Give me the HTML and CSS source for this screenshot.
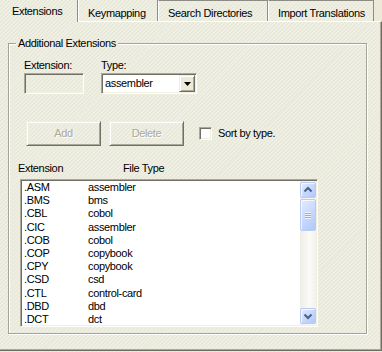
FILE: index.html
```html
<!DOCTYPE html>
<html lang="en">
<head>
    <meta charset="UTF-8">
    <title>Extensions</title>
    <link rel="stylesheet" href="styles.css">
</head>
<body>
    <div class="dialog">
        <div class="tabs">
            <div class="tab tab-active tab-extensions">Extensions</div>
            <div class="tab tab-keymapping">Keymapping</div>
            <div class="tab tab-search">Search Directories</div>
            <div class="tab tab-import">Import Translations</div>
        </div>
        <div class="panel">
            <fieldset class="group">
                <legend>Additional Extensions</legend>
                <div class="fields">
                    <div class="field field-ext">
                        <label>Extension:</label>
                        <div class="edit"></div>
                    </div>
                    <div class="field field-type">
                        <label>Type:</label>
                        <div class="combo">
                            <span class="combo-value">assembler</span>
                            <span class="combo-button">
                                <svg width="7" height="4" viewBox="0 0 7 4"><polygon points="0,0 7,0 3.5,4" fill="#000"/></svg>
                            </span>
                        </div>
                    </div>
                </div>
                <div class="actions">
                    <button class="btn" disabled>Add</button>
                    <button class="btn" disabled>Delete</button>
                    <label class="check"><span class="check-box"></span>Sort by type.</label>
                </div>
                <div class="list-head">
                    <span>Extension</span>
                    <span>File Type</span>
                </div>
                <div class="listbox">
                    <div class="list-rows">
                        <div class="row"><span>.ASM</span><span>assembler</span></div>
                        <div class="row"><span>.BMS</span><span>bms</span></div>
                        <div class="row"><span>.CBL</span><span>cobol</span></div>
                        <div class="row"><span>.CIC</span><span>assembler</span></div>
                        <div class="row"><span>.COB</span><span>cobol</span></div>
                        <div class="row"><span>.COP</span><span>copybook</span></div>
                        <div class="row"><span>.CPY</span><span>copybook</span></div>
                        <div class="row"><span>.CSD</span><span>csd</span></div>
                        <div class="row"><span>.CTL</span><span>control-card</span></div>
                        <div class="row"><span>.DBD</span><span>dbd</span></div>
                        <div class="row"><span>.DCT</span><span>dct</span></div>
                    </div>
                    <div class="scrollbar">
                        <div class="sb-btn">
                            <svg width="14" height="14" viewBox="0 0 14 14"><polyline points="3.5,8.5 7,5 10.5,8.5" fill="none" stroke="#4d6185" stroke-width="2"/></svg>
                        </div>
                        <div class="sb-thumb">
                            <span class="grip"></span>
                        </div>
                        <div class="sb-track"></div>
                        <div class="sb-btn">
                            <svg width="14" height="14" viewBox="0 0 14 14"><polyline points="3.5,5.5 7,9 10.5,5.5" fill="none" stroke="#4d6185" stroke-width="2"/></svg>
                        </div>
                    </div>
                </div>
            </fieldset>
        </div>
    </div>
</body>
</html>
```

FILE: styles.css
```css
body {
    margin: 0;
    width: 382px;
    height: 352px;
    overflow: hidden;
    background-color: #ece9d8;
    font-family: "Liberation Sans", Arial, sans-serif;
    font-size: 11px;
    line-height: 13px;
    letter-spacing: -0.35px;
    color: #000000;
}

/* xp dialog texture, fixed so every piece lines up */
.tab,
.panel,
.group legend,
.edit,
.btn {
    background-color: #ecece0;
    background-image: repeating-linear-gradient(135deg, #efefe6 0px, #efefe6 1.4px, #e8e9d9 1.4px, #e8e9d9 2.8px);
    background-attachment: fixed;
}

.tabs {
    display: flex;
    height: 21px;
}

.tab {
    box-sizing: border-box;
    height: 21px;
    padding: 7px 0 0 9px;
    border-left: 1px solid #ffffff;
    border-right: 1px solid #8d8d84;
    white-space: nowrap;
}

.tab-active {
    position: relative;
    z-index: 1;
    height: 22px;
    padding: 5px 0 0 12px;
    border-left: none;
}

.tab-extensions { width: 78px; }
.tab-keymapping { width: 80px; }
.tab-search { width: 110px; border-top: 1px solid #8d8d84; padding-top: 6px; }
.tab-import { width: 106px; border-top: 1px solid #8d8d84; padding-top: 6px; }

.panel {
    box-sizing: border-box;
    width: 382px;
    height: 330px;
    padding-top: 15px;
    border-top: 1px solid #ffffff;
    border-right: 1px solid #716f64;
    border-bottom: 1px solid #716f64;
    box-shadow: inset -1px -1px 0 #aca899;
}

.group {
    box-sizing: border-box;
    width: 359px;
    height: 297px;
    margin: 0 0 0 8px;
    padding: 0;
    border: 1px solid #a3a398;
    box-shadow: 1px 1px 0 #ffffff, inset 1px 1px 0 #ffffff;
    min-inline-size: 0;
}

.group legend {
    margin-left: 7px;
    padding: 0 2px;
    line-height: 13px;
}

.fields {
    display: flex;
    gap: 17px;
    margin-top: 9px;
    padding-left: 15px;
}

.field label {
    display: block;
    margin-bottom: 1px;
}

.field-ext { width: 60px; }
.field-type { width: 96px; }

.edit,
.combo,
.check-box,
.listbox {
    box-sizing: border-box;
    border: 1px solid;
    border-color: #aca899 #ffffff #ffffff #aca899;
    box-shadow: inset 1px 1px 0 #716f64, inset -1px -1px 0 #f1efe2;
}

.edit {
    height: 21px;
}

.combo {
    display: flex;
    align-items: center;
    height: 21px;
    padding: 1px;
    background: #ffffff;
}

.combo-value {
    flex: 1;
    padding-left: 2px;
}

.combo-button {
    display: flex;
    align-items: center;
    justify-content: center;
    box-sizing: border-box;
    width: 16px;
    height: 17px;
    background: #ece9d8;
    border: 1px solid;
    border-color: #f1efe2 #716f64 #716f64 #f1efe2;
    box-shadow: inset 1px 1px 0 #ffffff, inset -1px -1px 0 #aca899;
}

.actions {
    display: flex;
    align-items: center;
    margin-top: 27px;
    padding-left: 17px;
}

.btn {
    box-sizing: border-box;
    width: 75px;
    height: 25px;
    margin-right: 8px;
    padding: 0;
    font: inherit;
    letter-spacing: inherit;
    color: #aca899;
    text-shadow: 1px 1px 0 #ffffff;
    border: 1px solid;
    border-color: #f1efe2 #716f64 #716f64 #f1efe2;
    box-shadow: inset 1px 1px 0 #ffffff, inset -1px -1px 0 #aca899;
}

.check {
    display: flex;
    align-items: center;
    gap: 6px;
    margin-left: 7px;
}

.check-box {
    width: 13px;
    height: 13px;
    background: #ffffff;
}

.list-head {
    display: grid;
    grid-template-columns: 105px auto;
    margin-top: 16px;
    padding-left: 9px;
}

.listbox {
    display: flex;
    width: 298px;
    height: 148px;
    margin: 4px 0 0 11px;
    padding: 1px;
    background: #ffffff;
}

.list-rows {
    flex: 1;
    overflow: hidden;
    padding-left: 2px;
}

.row {
    display: grid;
    grid-template-columns: 64px auto;
    height: 13.2px;
    line-height: 13px;
}

.scrollbar {
    display: flex;
    flex-direction: column;
    width: 16px;
    padding: 1px 0;
    box-sizing: border-box;
    background: linear-gradient(90deg, #eeede5, #fbfbf8 60%, #f3f1ea);
}

.sb-btn,
.sb-thumb {
    display: flex;
    align-items: center;
    justify-content: center;
    box-sizing: border-box;
    border: 1px solid #b9cbf3;
    border-radius: 2px;
    background: linear-gradient(135deg, #e4ecfe, #c2d5fc 60%, #b1c8f7);
    box-shadow: inset 1px 1px 0 rgba(255, 255, 255, 0.7);
}

.sb-btn {
    height: 16px;
}

.sb-thumb {
    height: 32px;
    margin-top: 1px;
}

.grip {
    width: 6px;
    height: 7px;
    background: repeating-linear-gradient(180deg, #eef4fe 0px, #eef4fe 1px, #8cb0f8 1px, #8cb0f8 2px);
}

.sb-track {
    flex: 1;
}
```
